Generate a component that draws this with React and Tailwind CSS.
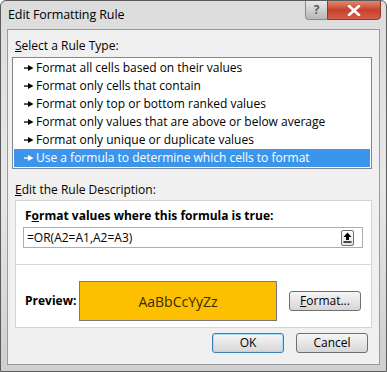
import React from 'react';

const rules = [
  'Format all cells based on their values',
  'Format only cells that contain',
  'Format only top or bottom ranked values',
  'Format only values that are above or below average',
  'Format only unique or duplicate values',
  'Use a formula to determine which cells to format',
];

function Btn({ children, def, className }) {
  return (
    <div
      className={
        'h-[20px] flex items-center justify-center rounded-[3px] border text-[12px] text-black bg-gradient-to-b from-[#f6f6f6] via-[#e6e6e6] to-[#d6d6d6] ' +
        (def ? 'border-[#3c7fb1] shadow-[inset_0_0_0_1px_#a6dcf5] ' : 'border-[#707070] ') +
        className
      }
    >
      {children}
    </div>
  );
}

export default function App() {
  return (
    <div
      className="w-[387px] h-[372px] bg-gradient-to-b from-[#dcdcdc] via-[#e8e8e8] to-[#cfcfcf] flex flex-col overflow-hidden rounded-t-[6px] border border-[#5c5c5c]"
      style={{ fontFamily: '"Open Sans", "Noto Sans", sans-serif' }}
    >
      {/* title bar */}
      <div className="h-[28px] flex justify-between items-start">
        <div className="pl-[7px] pt-[5px] text-[12.5px] text-black tracking-[-0.1px]">Edit Formatting Rule</div>
        <div className="flex mr-[5px] -mt-px">
          <div className="w-[22px] h-[20px] border border-[#8a8a8a] border-r-0 rounded-bl-[4px] bg-gradient-to-b from-[#e8e8e8] to-[#b8b8b8] flex items-center justify-center text-[12px] font-bold text-[#5a5a5a]">
            ?
          </div>
          <div className="w-[54px] h-[20px] border border-[#8a3a2f] rounded-br-[4px] bg-gradient-to-b from-[#e0876f] via-[#c7402b] to-[#d5604a] flex items-center justify-center">
            <svg width="14" height="11" viewBox="0 0 14 11">
              <path d="M2 1 L12 10 M12 1 L2 10" stroke="#fff" strokeWidth="2.6" strokeLinecap="round" />
            </svg>
          </div>
        </div>
      </div>

      {/* content */}
      <div className="mx-[6px] h-[336px] border border-[#9a9a9a] bg-[#f0f0f0] flex flex-col text-[12px] text-black">
        <div className="pl-[7px] pt-[8px] leading-[16px]">
          <span className="underline">S</span>elect a Rule Type:
        </div>
        <div className="mt-[3px] ml-[4px] mr-[7px] border border-[#828790] bg-white p-px">
          {rules.map((r, i) => {
            const sel = i === rules.length - 1;
            return (
              <div
                key={i}
                className={'h-[18px] flex items-center pl-[10px] ' + (sel ? 'bg-[#3b95ea] text-white' : '')}
              >
                <svg width="10" height="6" viewBox="0 0 10 6" className="mr-[2px]">
                  <rect x="0" y="2.4" width="5" height="1.3" fill={sel ? '#fff' : '#000'} />
                  <path d="M4 0 L9.5 3 L4 6 Z" fill={sel ? '#fff' : '#000'} />
                </svg>
                <span>{r}</span>
              </div>
            );
          })}
        </div>

        <div className="pl-[7px] mt-[13px] leading-[16px]">
          <span className="underline">E</span>dit the Rule Description:
        </div>
        <div className="mt-[2px] ml-[7px] mr-[7px] border border-[#d4d4d4] bg-white flex flex-col h-[128px]">
          <div className="pl-[9px] pt-[7px] leading-[16px] font-bold">
            F<span className="underline">o</span>rmat values where this formula is true:
          </div>
          <div className="mt-[3px] ml-[7px] mr-[8px] h-[21px] border border-[#abadb3] flex items-center justify-between pl-[3px] pr-[8px]">
            <span>=OR(A2=A1,A2=A3)</span>
            <div className="w-[13px] h-[16px] border border-[#707070] rounded-[2px] bg-gradient-to-b from-white to-[#e4e4e4] flex items-center justify-center">
              <svg width="9" height="11" viewBox="0 0 9 11">
                <path d="M4.5 0.5 L0.5 5 H3 V8 H6 V5 H8.5 Z" fill="#000" />
                <rect x="0.5" y="9.3" width="8" height="1.4" fill="#000" />
              </svg>
            </div>
          </div>
          <div className="mt-[16px] border-t border-[#d8d8d8]" />
          <div className="flex items-center mt-[16px] pl-[9px]">
            <div className="w-[54px] font-bold">Preview:</div>
            <div className="w-[198px] h-[40px] border border-[#7a7a7a] bg-[#fdc000] flex items-center justify-center text-[14px] text-[#3a2a00]">
              AaBbCcYyZz
            </div>
            <Btn className="ml-[12px] w-[72px]">
              <span className="underline">F</span>ormat...
            </Btn>
          </div>
        </div>

        <div className="flex justify-end mt-[5px] mr-[11px] gap-[12px]">
          <Btn def className="w-[72px]">OK</Btn>
          <Btn className="w-[72px]">Cancel</Btn>
        </div>
      </div>
    </div>
  );
}
